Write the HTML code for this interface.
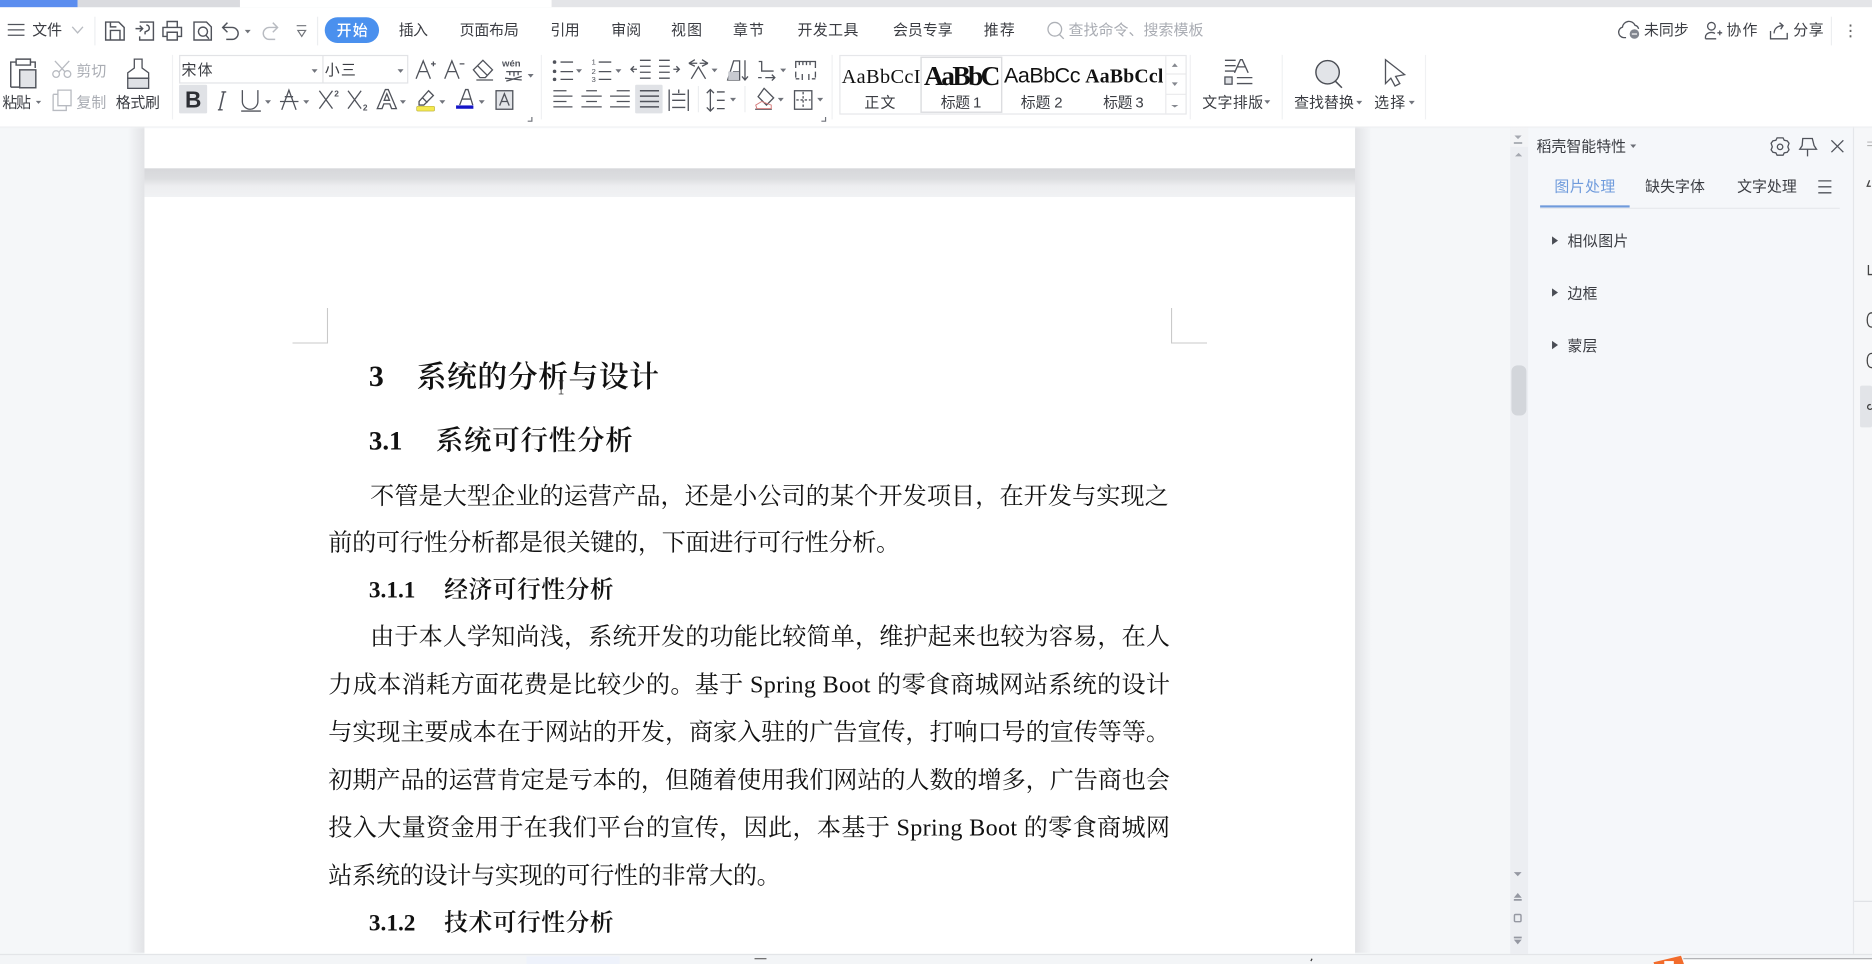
<!DOCTYPE html>
<html lang="zh"><head><meta charset="utf-8"><title>WPS</title>
<style>
html,body{margin:0;padding:0;width:1872px;height:964px;overflow:hidden;background:#f5f7f9}
svg{display:block}
text{font-family:"Liberation Sans","Noto Sans CJK SC",sans-serif;fill:#3a3c42;font-size:12.5px;white-space:pre}
.g{fill:#a9acb3}
.ic{fill:none;stroke:#50535b;stroke-width:1.1}
.dis{fill:none;stroke:#b8bbc1;stroke-width:1.1}
.d text{font-family:"Liberation Serif","Noto Serif CJK SC",serif;fill:#111;font-size:20.2px}
.d .b{font-weight:700}
.d .c{font-weight:600}
</style></head><body>
<svg width="1872" height="964" viewBox="0 0 1568 807.45" preserveAspectRatio="none" xmlns="http://www.w3.org/2000/svg">
<defs>
<linearGradient id="sb" x1="0" y1="0" x2="0" y2="1"><stop offset="0" stop-color="#d6d7da"/><stop offset=".35" stop-color="#dcdde0"/><stop offset=".62" stop-color="#edeef0"/><stop offset="1" stop-color="#f1f2f4"/></linearGradient>
<linearGradient id="sl" x1="0" y1="0" x2="1" y2="0"><stop offset="0" stop-color="#f5f7f9"/><stop offset="1" stop-color="#e2e3e6"/></linearGradient>
<linearGradient id="sr" x1="1" y1="0" x2="0" y2="0"><stop offset="0" stop-color="#f5f7f9"/><stop offset="1" stop-color="#e2e3e6"/></linearGradient>
<linearGradient id="rs" x1="0" y1="0" x2="0" y2="1"><stop offset="0" stop-color="#e8e9ec"/><stop offset="1" stop-color="#f5f7f9" stop-opacity="0"/></linearGradient>
</defs>

<!-- document area -->
<rect width="1568" height="808" fill="#f5f7f9"/>
<rect x="107" y="106" width="14" height="692" fill="url(#sl)"/>
<rect x="1135" y="106" width="14" height="692" fill="url(#sr)"/>
<rect x="121" y="106" width="1014" height="35" fill="#fff"/>
<rect x="121" y="141" width="1014" height="24" fill="url(#sb)"/>
<rect x="121" y="165" width="1014" height="634" fill="#fff"/>
<path d="M245 287.3h29.3V258M981.3 258v29.3H1011" fill="none" stroke="#c9c9c9" stroke-width=".9"/>

<g class="d">
<text x="309" y="323.500" class="b" style="font-size:25px">3</text>
<text x="349" y="324" class="c" style="font-size:25px" textLength="203">系统的分析与设计</text>
<text x="309" y="376.500" class="b" style="font-size:22.500px">3.1</text>
<text x="365" y="376.500" class="c" style="font-size:23px" textLength="165">系统可行性分析</text>
<text x="310" y="422" textLength="669">不管是大型企业的运营产品，还是小公司的某个开发项目，在开发与实现之</text>
<text x="275" y="461" textLength="479">前的可行性分析都是很关键的，下面进行可行性分析。</text>
<text x="309" y="500.500" class="b" style="font-size:19.500px">3.1.1</text>
<text x="372" y="500.500" class="c" style="font-size:20px" textLength="142">经济可行性分析</text>
<text x="310" y="540" textLength="670">由于本人学知尚浅，系统开发的功能比较简单，维护起来也较为容易，在人</text>
<text x="275" y="580" textLength="705">力成本消耗方面花费是比较少的。基于 Spring Boot 的零食商城网站系统的设计</text>
<text x="275" y="620" textLength="705">与实现主要成本在于网站的开发，商家入驻的广告宣传，打响口号的宣传等等。</text>
<text x="275" y="660" textLength="705">初期产品的运营肯定是亏本的，但随着使用我们网站的人数的增多，广告商也会</text>
<text x="275" y="700" textLength="705">投入大量资金用于在我们平台的宣传，因此，本基于 Spring Boot 的零食商城网</text>
<text x="275" y="740" textLength="379">站系统的设计与实现的可行性的非常大的。</text>
<text x="309" y="779.500" class="b" style="font-size:19.500px">3.1.2</text>
<text x="372" y="779.500" class="c" style="font-size:20px" textLength="142">技术可行性分析</text>
</g>
<path d="M468 319h4M470 319v11M468 330h4" stroke="#333" stroke-width=".7" fill="none"/>

<!-- scrollbar -->
<rect x="1265" y="106" width="15" height="693" fill="#eceef2"/>
<rect x="1265" y="106" width="15" height="17" fill="#f3f4f6"/>
<rect x="1266" y="306" width="12.500" height="42" rx="5" fill="#d3d6db"/>
<path d="M1268.500 113.500h6l-3 3zM1268 119h7v1.500h-7zM1269 131h6l-3-3z" fill="#a5a8b0"/>
<path d="M1268 730.500h6.500l-3.200 3.500zM1268 752l3.300-4 3.300 4zM1268 753h6.600v1.500h-6.600zM1268 784.500h6.600v1.500h-6.600zM1268 787h6.600l-3.300 4z" fill="#9598a2"/>
<rect x="1268.500" y="766" width="5.500" height="6" rx="1" fill="none" stroke="#9598a2" stroke-width="1.200"/>

<!-- side panel -->
<rect x="1280" y="106" width="272" height="693" fill="#f5f7fa"/>
<rect x="1552" y="106" width="16" height="693" fill="#f6f7f9"/>
<path d="M1552.500 106v693" stroke="#e4e6ea" stroke-width="1"/>
<path d="M1553 755h15" stroke="#e0e2e6"/>
<rect x="1558" y="323" width="10" height="35" rx="1.500" fill="#e2e4e8"/>
<path d="M1564 119h4M1564 122h4" stroke="#aaa" stroke-width=".8"/>
<path d="M1566 151l-2 5h3M1565 222v8h3M1568 262c-3 0-4 3-4 6s1 6 4 6M1568 296c-3 0-4 3-4 6s1 6 4 6M1567 339a2 2 0 1 0 1 3" fill="none" stroke="#444" stroke-width="1.100"/>
<text x="1287" y="127" textLength="75">稻壳智能特性</text>
<path d="M1365.500 121h5l-2.500 3z" fill="#6b6e76"/>
<g class="ic" stroke-width="1.100">
<path d="M1488.500 115.500h5l1 2 2.500.5 1.500 2-1 3 1 2.500-1.500 2-2.500.5-1 2h-5l-1-2-2.500-.5-1.500-2 1-2.500-1-3 1.500-2 2.500-.5z"/>
<circle cx="1491" cy="123" r="2.300"/>
<path d="M1510 116h8l1.500 6 2 3h-14l2-3zM1514 125v6"/>
<path d="M1534 117.500l10 10M1544 117.500l-10 10"/>
<path d="M1523 151.500h11M1523 156.500h11M1523 161.500h11"/>
</g>
<text x="1302" y="160.500" textLength="51" style="fill:#6f9bdc">图片处理</text>
<text x="1378" y="160.500" textLength="50">缺失字体</text>
<text x="1455" y="160.500" textLength="50">文字处理</text>
<path d="M1290 174.500h251" stroke="#e6e8ec"/>
<rect x="1290" y="172" width="75" height="1.800" fill="#6f9bdc"/>
<path d="M1300 198v7l5-3.500zM1300 241.500v7l5-3.500zM1300 285.500v7l5-3.500z" fill="#4a4d55"/>
<text x="1313" y="206" textLength="51">相似图片</text>
<text x="1313" y="250" textLength="25">边框</text>
<text x="1313" y="294" textLength="25">蒙层</text>

<!-- ribbon -->
<rect x="0" y="106" width="1568" height="2" fill="url(#rs)"/>
<rect x="0" y="6" width="1568" height="100" fill="#fff"/>
<rect x="0" y="0" width="1568" height="6" fill="#e4e5e8"/>
<rect x="0" y="0" width="65" height="6" fill="#5b8def"/>
<rect x="65" y="0" width="136" height="6" fill="#dadbdf"/>
<rect x="201" y="0" width="261" height="6" fill="#fff"/>

<!-- tabs row -->
<path class="ic" d="M6.500 20.500h14M6.500 25h14M6.500 29.500h14"/>
<text x="27" y="29.500" textLength="25">文件</text>
<path class="dis" d="M60.500 22.500l4.500 5 4.500-5"/>
<path d="M79.500 14v24M266 14v24M1534 14v24" stroke="#eceef0"/>
<g class="ic" style="stroke-width:1.200">
<path d="M88.500 18.500h11l4.500 4.500v10.500h-15.500zM92.500 33.500v-8h8v8M92.500 18.500v4h5"/>
<path d="M117 18.500h11.500v15h-11.500v-3M113.500 24h6M117 21.500l2.500 2.500-2.500 2.500M122.500 21a2.500 2.500 0 0 1 1 4.800l-2 1v2"/>
<path d="M140 23v-5h8.500v5M140 30.500h-3.500v-7.500h15.500v7.500h-3.500M140 27h8.500v6.500h-8.500z"/>
<path d="M162.500 18.500h10.500l4 4v11h-14.500zM175 32.500l-2.500-3"/>
<circle cx="170" cy="26.500" r="3.800"/>
<path d="M190.500 19l-4 4 4 4M186.500 23h8a5 5 0 0 1 0 10h-5"/>
</g>
<path class="dis" style="stroke-width:1.200" d="M228.500 19l4 4-4 4M232.500 23h-7a5 5 0 0 0 0 10h5"/>
<path d="M205 25h5l-2.500 3z" fill="#707379"/>
<path d="M248.500 21.500h8M249.500 25.500h6.500l-3.250 5z" fill="none" stroke="#707379"/>
<rect x="272" y="14.500" width="45.500" height="21.500" rx="10.700" fill="#4a90ee"/>
<text x="282" y="29.800" textLength="26" style="fill:#fff;font-weight:500">开始</text>
<text x="334" y="29.500" textLength="24.500">插入</text>
<text x="385" y="29.500" textLength="49.500">页面布局</text>
<text x="461" y="29.500" textLength="24.500">引用</text>
<text x="512" y="29.500" textLength="25">审阅</text>
<text x="562" y="29.500" textLength="26">视图</text>
<text x="614" y="29.500" textLength="26">章节</text>
<text x="668" y="29.500" textLength="51">开发工具</text>
<text x="748" y="29.500" textLength="50">会员专享</text>
<text x="824" y="29.500" textLength="26">推荐</text>
<circle cx="883.500" cy="24.500" r="5.700" fill="none" stroke="#aeb1b7" stroke-width="1.100"/>
<path d="M887.500 29l3.500 3.500" stroke="#aeb1b7" stroke-width="1.100"/>
<text x="895" y="29.500" textLength="113" class="g">查找命令、搜索模板</text>

<g class="ic">
<path d="M1362 31.500h-2a4.500 4.500 0 0 1-1-8.800 5.500 5.500 0 0 1 10.500-1.500 4 4 0 0 1 3 3"/>
<circle cx="1433.500" cy="22" r="3.200"/>
<path d="M1428.500 32.500v-1.500a5 4 0 0 1 8-3M1428.500 32.500h9M1438.500 27.500h4M1440.500 25.500v4"/>
<path d="M1483 26v6.500h14v-5M1486 28c0-4 3-6.500 7-6.500M1490.500 19l3 2.500-2 3"/>
</g>
<circle cx="1369" cy="28.500" r="4" fill="#81858e"/><path d="M1366.800 28.500h4.400" stroke="#fff" stroke-width="1"/>
<text x="1377" y="29.500" textLength="37.500">未同步</text>
<text x="1446" y="29.500" textLength="26">协作</text>
<text x="1502" y="29.500" textLength="25.500">分享</text>
<path d="M1550 20.500v1.800M1550 25v1.800M1550 29.500v1.800" stroke="#666" stroke-width="1.500"/>

<!-- clipboard group -->
<g class="ic" style="stroke-width:1.200">
<path d="M9 73V52h4.500M25.500 52H29.500V57M9 73h7"/>
<path d="M13.500 49.500h12v5h-12z"/>
<rect x="16.500" y="58.500" width="13.500" height="15" fill="#e2e4e8"/>
</g>
<rect x="107" y="65.500" width="17.500" height="8.500" fill="#dfe1e5" stroke="#50535b" stroke-width="1.100"/>
<path d="M112.500 49.500h6.500v7.500l5.500 4v4.500h-17.500V61l5.500-4z" fill="none" stroke="#50535b" stroke-width="1.100"/>
<g class="dis">
<path d="M46 51l12 13M58 51l-12 13"/>
<circle cx="47" cy="62" r="2.800" fill="#fff"/><circle cx="56.500" cy="62" r="2.800" fill="#fff"/>
<path d="M48.500 75.500h11v13h-11zM44.500 79h4M44.500 79v13.500h11V89"/>
</g>
<text x="2" y="90" textLength="24">粘贴</text>
<text x="64" y="63.500" textLength="25" class="g">剪切</text>
<text x="64" y="90" textLength="25" class="g">复制</text>
<text x="97" y="90" textLength="37">格式刷</text>
<path d="M144.500 46v54M453.500 46v54M697 46v54M997 46v54M1074 46v54M1194 46v54" stroke="#f0f1f3"/>

<!-- font group -->
<rect x="150.500" y="46.500" width="191" height="23" fill="#fff" stroke="#e2e3e6"/>
<path d="M270.500 46.500v23" stroke="#e2e3e6"/>
<text x="152" y="63" textLength="26" style="font-size:12.500px">宋体</text>
<text x="272" y="63" textLength="26">小三</text>
<rect x="150" y="71" width="23.500" height="24" rx="1" fill="#e0e2e6"/>
<text x="155" y="90" style="font-size:19px;font-weight:700;fill:#2c2e33">B</text>
<g class="ic" style="stroke-width:1.100">
<path d="M348.500 66l6-15 6 15M351 60h7M361 53.500h4M363 51.500v4"/>
<path d="M372.500 66l6-15 6 15M375 60h7M385 53.500h4"/>
<path d="M396.500 58.500l8-8 8 8-6 6.500h-4.500zM400 55l8 8M399 67h14"/>
<path d="M424 60h13M430.500 60v4M423 65.500l14 1.500M437 64l-13 4M427 60v3M434 60v3"/>
<path d="M187.500 77l-3.500 15" style="stroke-width:1.300"/>
<path d="M182.500 92h4M185.500 77h4"/>
<path d="M203 75.500v9.500a6.500 6.500 0 0 0 13 0v-9.500M202 93h16.500"/>
<path d="M234.500 85h15.500M236 92l6-16.500 6 16.500M238.500 81h7"/>
<path d="M267.500 91l11-15M267.500 76l11 15"/>
<path d="M291.500 91l11-15M291.500 76l11 15"/>
<path d="M316 91l6.800-16h2.400l6.800 16h-4l-1.500-4h-5l-1.500 4zM321.800 84h4.400l-2.200-5.500z"/>
<path d="M351 85l8-9 4 4-8 8h-4zM354 82l4 4"/>
<path d="M385 88l5-13h2l4 13M387 83h7"/>
<rect x="415.500" y="76" width="14" height="15.500" fill="#e3e5e9"/>
<path d="M418.500 88.500l4-10 4 10M420 85h5"/>
</g>
<text x="420.500" y="55.500" style="font-size:8px;fill:#50535b;font-weight:700">wén</text>
<text x="280" y="81" style="font-size:7px;fill:#50535b;font-weight:700">2</text>
<text x="304" y="92.500" style="font-size:7px;fill:#50535b;font-weight:700">2</text>
<rect x="349" y="89" width="15" height="4" rx="1" fill="#f4e94f" stroke="#b8ad3d" stroke-width=".5"/>
<rect x="382" y="88.300" width="14.500" height="2.800" fill="#1515c8"/>

<!-- paragraph group -->
<g class="ic">
<path d="M469.500 52h10.500M469.500 60h10.500M469.500 66.500h10.500"/>
<path d="M501.500 52h10.500M501.500 60h10.500M501.500 66.500h10.500"/>
<path d="M536 50.500h9M536 55.500h9M536 60.500h9M536 65.500h9M528.500 58h5M531 55.500l-2.500 2.500 2.500 2.500"/>
<path d="M552 50.500h9M552 55.500h9M552 60.500h9M552 65.500h9M564 58h5M566.500 55.500l2.500 2.500-2.500 2.500"/>
<path d="M577 53l5-3M577 53l5 2.500M577 53h7M593 53l-5-3M593 53l-5 2.500M593 53h-7M579 66l6-10 6 10"/>
<path d="M609.500 67l5-16h5v16zM609.500 67h10M614 60h5M624 50.500v16M621.500 64l2.500 3 2.500-3"/>
<path d="M638 51.500v8h10M635.500 51.500h3M641 65h8M646.500 62.500l2.500 2.500-2.500 2.500M638 65h-3"/>
<path d="M666.500 57v-5.500h16.500v5.500M669.500 51.500v3M672.500 51.500v3M675.500 51.500v3M678.500 51.500v3M666.500 60v5M683 60v5M666.500 66h3M680 66h3M672 62v5M677.500 62v5"/>
<path d="M463.500 76h11M463.500 80.500h16M463.500 85h11M463.500 89.500h16"/>
<path d="M491 76h9M487 80.500h17M491 85h9M487 89.500h17"/>
<path d="M516.500 76h11M511 80.500h16.500M516.500 85h11M511 89.500h16.500"/>
<path d="M560.500 75v18M576.500 75v18M563 79h11M563 84h11M563 90h11M568.500 75v3"/>
<path d="M595 75v18M592 78l3-3 3 3M592 90l3 3 3-3M600.500 77h6.500M600.500 84h6.500M600.500 91h6.500"/>
<path d="M640 74l8 8-6 6-7-7zM632.500 91.500h14"/>
<rect x="665.500" y="76" width="14.500" height="15.500"/>
<path d="M672.700 77v13M667 83.700h12" stroke-dasharray="2 1.500"/>
<path d="M1026 50.500h9M1026 55h9M1026 59.500h9M1034 61l5-11h1.500l5 11M1036.500 56h7"/>
<rect x="1026" y="64.500" width="6" height="6" fill="#dfe1e5"/>
<path d="M1036 65h13M1036 70h13"/>
</g>
<rect x="610" y="60" width="9" height="7" fill="#c8cad0"/>
<g fill="#50535b">
<circle cx="464.500" cy="52" r="1.500"/><circle cx="464.500" cy="59.800" r="1.500"/><circle cx="464.500" cy="66.500" r="1.500"/>
</g>
<text x="495.500" y="54" style="font-size:6.500px;fill:#50535b">1</text>
<text x="495.500" y="61.800" style="font-size:6.500px;fill:#50535b">2</text>
<text x="495.500" y="68.500" style="font-size:6.500px;fill:#50535b">3</text>
<rect x="532" y="71" width="23" height="24" rx="1" fill="#e0e2e6"/>
<path d="M536 76h16M536 80.500h16M536 85h16M536 89.500h16" stroke="#50535b" stroke-width="1.300"/>
<path d="M585 72v22M624 72v22" stroke="#eceef0"/>
<path d="M634 91l-1-3 5-3 8 3 0 3z" fill="none" stroke="#d67b7b" stroke-width=".8"/>

<!-- dropdown carets -->
<path fill="#70737b" d="M30 84.500h4.500l-2.250 2.500zM442 62h5l-2.500 3zM222 84h5l-2.500 3zM254 84h5l-2.500 3zM335 84h5l-2.500 3zM368 84h5l-2.500 3zM401 84h5l-2.500 3zM261 58h5l-2.500 3zM333 58h5l-2.500 3zM482.500 58h5l-2.500 3zM515.500 58h5l-2.500 3zM596 57.500h5l-2.500 3zM653.500 57.500h5l-2.500 3zM611.500 82h5l-2.500 3zM651.500 82h5l-2.500 3zM684.500 82h5l-2.500 3zM1059 84h5l-2.500 3zM1136 84.500h5l-2.500 3zM1180 84.500h5l-2.500 3zM446 98v4h-4v-1h3v-3zM692 98v4h-4v-1h3v-3z"/>

<!-- styles -->
<rect x="703.500" y="46.500" width="290" height="49" fill="#fff" stroke="#e6e7ea"/>
<rect x="771.500" y="48" width="67.500" height="46" fill="#fff" stroke="#dcdde0" stroke-width="1.200"/>
<path d="M976.500 47v48M977 62h16M977 79h16" stroke="#e9eaec"/>
<path d="M981.500 56h5l-2.500-3zM981.500 69h5l-2.500 3zM981 85h6M981 88h6l-3 2z" fill="#85888f"/>
<text x="705" y="69.500" textLength="66" style="font-family:'Liberation Serif',serif;font-size:17px;fill:#111">AaBbCcI</text>
<text x="774" y="71" textLength="64" style="font-family:'Liberation Serif',serif;font-size:23px;font-weight:700;fill:#111">AaBbC</text>
<text x="841" y="69" textLength="64" style="font-family:'Liberation Sans',sans-serif;font-size:18px;fill:#111">AaBbCc</text>
<text x="909" y="69" textLength="65.500" style="font-family:'Liberation Serif',serif;font-size:16.500px;font-weight:700;fill:#111">AaBbCcl</text>
<text x="724" y="90" textLength="26">正文</text>
<text x="788" y="90" textLength="34">标题 1</text>
<text x="855" y="90" textLength="35">标题 2</text>
<text x="924" y="90" textLength="34">标题 3</text>

<text x="1007" y="90" textLength="51">文字排版</text>
<circle cx="1112" cy="60.500" r="9.800" fill="#e2e4e8" stroke="#4b4e55" stroke-width="1.200"/>
<path d="M1118.500 68l5.500 5.500" stroke="#4b4e55" stroke-width="1.300"/>
<text x="1084" y="90" textLength="50">查找替换</text>
<path d="M1160.500 50v20l4.500-4.500 3.500 6.500 4-2-3.500-6 7.500-1.500z" fill="#fff" stroke="#50535b" stroke-width="1.100"/>
<text x="1151" y="90" textLength="26">选择</text>

<!-- status bar -->
<rect x="0" y="799" width="1568" height="9" fill="#f3f5f7"/>
<path d="M0 799.500h1568" stroke="#e3e5e8"/>
<rect x="441" y="801" width="78" height="7" fill="#eef2fb"/>
<path d="M632 803h10" stroke="#666" stroke-width="1"/>
<path d="M1098 805l1-2" stroke="#333"/>
<rect x="1410" y="802.500" width="158" height="5" fill="#fff"/>
<path d="M1410 803h158" stroke="#a8a9ad" stroke-width=".9"/>
<path d="M1385 806l23-5.500 2.500 7h-25z" fill="#f26c2c"/>
<rect x="1394" y="805" width="8" height="3" fill="#fff"/>
</svg>
</body></html>
